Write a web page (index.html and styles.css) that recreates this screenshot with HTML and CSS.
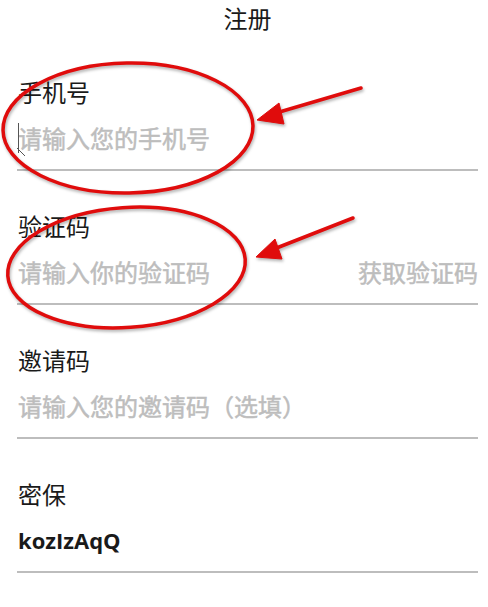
FILE: index.html
```html
<!DOCTYPE html>
<html lang="zh-CN">
<head>
<meta charset="utf-8">
<title>注册</title>
<link rel="stylesheet" href="styles.css">
</head>
<body>
<div class="page">
  <header class="header">注册</header>
  <form class="form">
    <div class="field">
      <div class="label">手机号</div>
      <div class="row"><span class="placeholder">请输入您的手机号</span></div>
    </div>
    <div class="field">
      <div class="label">验证码</div>
      <div class="row"><span class="placeholder">请输入你的验证码</span><span class="action">获取验证码</span></div>
    </div>
    <div class="field">
      <div class="label">邀请码</div>
      <div class="row"><span class="placeholder">请输入您的邀请码（选填）</span></div>
    </div>
    <div class="field">
      <div class="label">密保</div>
      <div class="row"><span class="value">kozIzAqQ</span></div>
    </div>
  </form>
  <svg class="annotations" width="488" height="607" viewBox="0 0 488 607" aria-hidden="true">
    <g class="caret">
      <line x1="18.5" y1="123" x2="18.5" y2="153" />
      <line x1="17" y1="148" x2="25" y2="156" />
    </g>
    <g class="marks">
      <ellipse cx="128" cy="128" rx="125" ry="65" transform="rotate(-1 128 128)" />
      <ellipse cx="126.5" cy="267.5" rx="119" ry="60" transform="rotate(-4 126.5 267.5)" />
      <line x1="361" y1="88" x2="276" y2="113" />
      <polygon class="head" points="257,120 279,103 284,124" />
      <line x1="353" y1="218" x2="274" y2="249" />
      <polygon class="head" points="256,257 275,239 282,259" />
    </g>
  </svg>
</div>
</body>
</html>
```

FILE: styles.css
```css
html, body {
  margin: 0;
  padding: 0;
  background: #ffffff;
}

.page {
  position: relative;
  width: 488px;
  height: 607px;
  overflow: hidden;
  font-family: "Noto Sans CJK SC", "Noto Sans", sans-serif;
  color: #1a1a1a;
}

.header {
  height: 37px;
  line-height: 36px;
  padding-left: 17px;
  padding-right: 10px;
  text-align: center;
  font-size: 24px;
  color: #1a1a1a;
}

.form {
  margin: 0;
  padding: 0 10px 0 17px;
}

.field {
  padding: 38px 0 14px;
  border-bottom: 2px solid #bdbdbd;
}

.label {
  font-size: 24px;
  line-height: 34px;
  padding-left: 1px;
}

.row {
  margin-top: 12px;
  display: flex;
  justify-content: space-between;
  align-items: center;
  font-size: 24px;
  line-height: 34px;
  padding-left: 1px;
}

.placeholder,
.action {
  color: #bdbdbd;
  -webkit-text-stroke: 0.5px #bdbdbd;
}

.value {
  font-family: "Open Sans", "Noto Sans", sans-serif;
  font-weight: 700;
  font-size: 22px;
  color: #1a1a1a;
}

.annotations {
  position: absolute;
  left: 0;
  top: 0;
  pointer-events: none;
}

.caret line {
  stroke: #555555;
  stroke-width: 1;
}

.marks {
  filter: drop-shadow(1px 2px 1.5px rgba(0, 0, 0, 0.3));
}

.marks ellipse,
.marks line {
  fill: none;
  stroke: #e00c0c;
  stroke-width: 3.5;
  stroke-linecap: round;
}

.marks .head {
  fill: #e00c0c;
  stroke: #e00c0c;
  stroke-width: 1;
  stroke-linejoin: round;
}
```
